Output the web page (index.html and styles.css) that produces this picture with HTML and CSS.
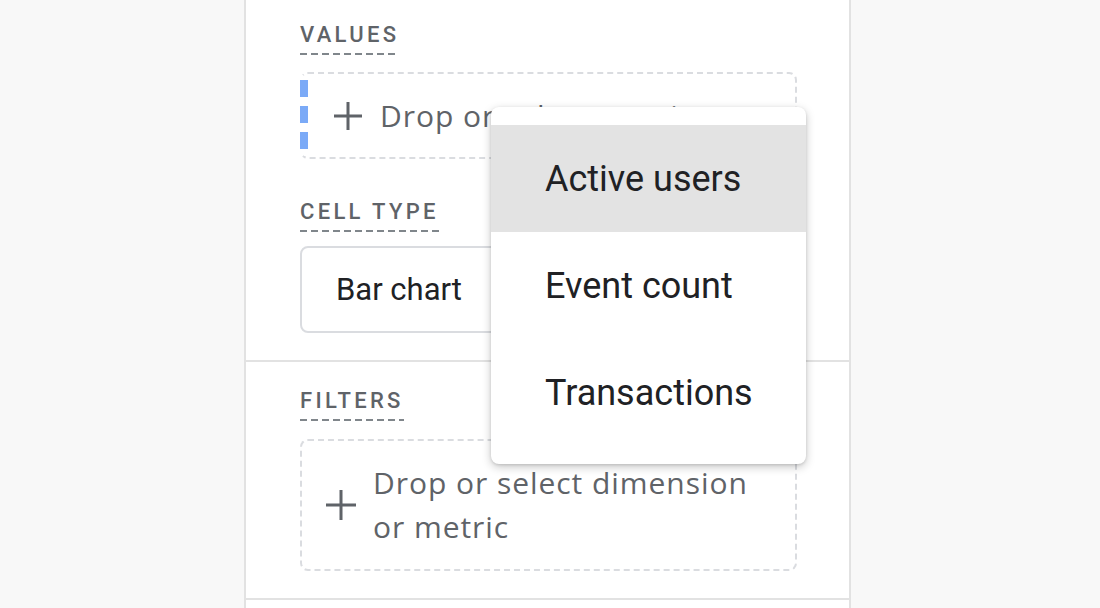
FILE: index.html
```html
<!DOCTYPE html>
<html>
<head>
<meta charset="utf-8">
<link rel="stylesheet" href="styles.css">
</head>
<body>
<div class="page">
  <div class="panel">
    <section class="section first">
      <div class="label">VALUES</div>
      <div class="dropzone values-zone">
        <svg class="plus" width="30" height="30" viewBox="0 0 30 30"><path d="M15 1v28M1 15h28" stroke="#5f6368" stroke-width="3" fill="none"/></svg>
        <span class="drop-text">Drop or select metric</span>
      </div>
      <div class="label cell-label">CELL TYPE</div>
      <div class="select">Bar chart</div>
    </section>
    <section class="section filters">
      <div class="label">FILTERS</div>
      <div class="dropzone filter-zone">
        <svg class="plus" width="32" height="32" viewBox="0 0 32 32"><path d="M16 1v30M1 16h30" stroke="#5f6368" stroke-width="3" fill="none"/></svg>
        <span class="drop-text">Drop or select dimension<br>or metric</span>
      </div>
    </section>
    <section class="section rest"></section>
  </div>
  <div class="menu">
    <div class="menu-item active">Active users</div>
    <div class="menu-item">Event count</div>
    <div class="menu-item">Transactions</div>
  </div>
</div>
</body>
</html>
```

FILE: styles.css
```css
html, body {
  margin: 0;
  padding: 0;
  background: #f8f8f8;
}
.page {
  position: relative;
  width: 1100px;
  height: 608px;
  overflow: hidden;
  font-family: Roboto, "Liberation Sans", sans-serif;
}
.panel {
  margin-left: 244px;
  width: 603px;
  height: 608px;
  background: #fff;
  border-left: 2px solid #e2e2e2;
  border-right: 2px solid #e2e2e2;
  display: flex;
  flex-direction: column;
}
.section {
  padding: 0 52px 0 54px;
  border-bottom: 2px solid #e2e2e2;
}
.section.first {
  padding-top: 22px;
  padding-bottom: 27px;
}
.section.filters {
  padding-top: 26px;
  padding-bottom: 27px;
}
.section.rest {
  border-bottom: none;
  flex: 1;
}
.label {
  display: inline-block;
  font-size: 22px;
  font-weight: 500;
  letter-spacing: 3.3px;
  color: #5f6368;
  line-height: 26px;
  padding-bottom: 7px;
  background-image: linear-gradient(to right, #80868b 7px, transparent 7px);
  background-size: 11px 2px;
  background-repeat: repeat-x;
  background-position: left bottom;
}
.dropzone {
  margin-top: 17px;
  border: 2px dashed #dadce0;
  border-radius: 8px;
  display: flex;
  align-items: center;
  color: #5f6368;
  font-family: "Open Sans", sans-serif;
  font-size: 30px;
  font-weight: 500;
  letter-spacing: 0.95px;
}
.values-zone {
  position: relative;
  height: 83px;
  padding-left: 31px;
  border-left-color: transparent;
}
.values-zone::before {
  content: "";
  position: absolute;
  left: -2px;
  top: 6px;
  width: 8px;
  height: 70px;
  background: repeating-linear-gradient(to bottom, #7baaf7 0, #7baaf7 17px, transparent 17px, transparent 26px);
}
.plus {
  flex: none;
  margin-right: 17px;
}
.filter-zone {
  margin-top: 18px;
  height: 128px;
  padding-left: 23px;
}
.filter-zone .plus {
  margin-right: 16px;
}
.filter-zone .drop-text {
  line-height: 44px;
}
.cell-label {
  margin-top: 40px;
}
.select {
  margin-top: 14px;
  height: 83px;
  border: 2px solid #dadce0;
  border-radius: 8px;
  display: flex;
  align-items: center;
  padding-left: 34px;
  font-size: 31px;
  color: #202124;
}
.menu {
  position: absolute;
  left: 491px;
  top: 107px;
  width: 315px;
  padding: 18px 0;
  background: #fff;
  border-radius: 8px;
  box-shadow: 0 3px 10px rgba(0,0,0,0.22), 0 1px 3px rgba(0,0,0,0.12);
}
.menu-item {
  height: 107px;
  display: flex;
  align-items: center;
  padding-left: 54px;
  font-size: 36px;
  color: #202124;
}
.menu-item.active {
  background: #e3e3e3;
}
```
